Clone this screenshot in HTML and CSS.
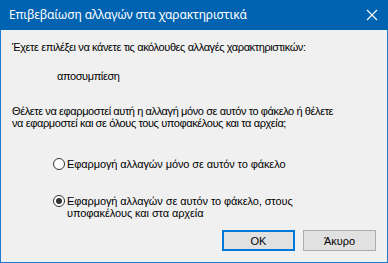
FILE: index.html
```html
<!DOCTYPE html>
<html lang="el">
<head>
    <meta charset="UTF-8">
    <title>Επιβεβαίωση αλλαγών στα χαρακτηριστικά</title>
    <link rel="stylesheet" href="styles.css">
</head>
<body>
    <div class="window">
        <div class="titlebar">
            <span class="title">Επιβεβαίωση αλλαγών στα χαρακτηριστικά</span>
            <svg class="close" width="12" height="12" viewBox="0 0 12 12">
                <path d="M1 1 L11 11 M11 1 L1 11" stroke="#fff" stroke-width="1.2" fill="none"/>
            </svg>
        </div>
        <div class="content">
            <p class="line">Έχετε επιλέξει να κάνετε τις ακόλουθες αλλαγές χαρακτηριστικών:</p>
            <p class="line attr">αποσυμπίεση</p>
            <p class="question">Θέλετε να εφαρμοστεί αυτή η αλλαγή μόνο σε αυτόν το φάκελο ή θέλετε<br>να εφαρμοστεί και σε όλους τους υποφακέλους και τα αρχεία;</p>
            <div class="options">
                <label class="option">
                    <span class="radio"></span>
                    <span class="label-text">Εφαρμογή αλλαγών μόνο σε αυτόν το φάκελο</span>
                </label>
                <label class="option second">
                    <span class="radio checked"></span>
                    <span class="label-text">Εφαρμογή αλλαγών σε αυτόν το φάκελο, στους<br>υποφακέλους και στα αρχεία</span>
                </label>
            </div>
            <div class="buttons">
                <button class="btn default">OK</button>
                <button class="btn">Άκυρο</button>
            </div>
        </div>
    </div>
</body>
</html>
```

FILE: styles.css
```css
body {
    margin: 0;
    background: #f0f0f0;
    font-family: 'Liberation Sans', Arial, sans-serif;
    -webkit-font-smoothing: antialiased;
}
.window {
    width: 388px;
    height: 263px;
    box-sizing: border-box;
    border: 1px solid #1a7bd0;
    border-top: none;
    background: #f0f0f0;
    display: flex;
    flex-direction: column;
}
.titlebar {
    height: 30px;
    margin: 0 -1px;
    background: #0063b1;
    color: #fff;
    display: flex;
    align-items: center;
    justify-content: space-between;
    padding: 0 10px 0 9px;
    flex-shrink: 0;
}
.title {
    font-family: 'Noto Sans', sans-serif;
    font-size: 12px;
    letter-spacing: -0.15px;
    position: relative;
    top: -1px;
}
.close {
    display: block;
}
.content {
    padding: 11px 11px 0 11px;
    font-size: 11px;
    letter-spacing: -0.4px;
    color: #000;
    flex: 1;
    display: flex;
    flex-direction: column;
}
.line {
    margin: 0;
    line-height: 13px;
}
.attr {
    margin-top: 16px;
    padding-left: 45px;
}
.question {
    margin: 22px 0 0 0;
    line-height: 12px;
    white-space: nowrap;
}
.options {
    margin-top: 29px;
    padding-left: 41px;
}
.option {
    display: flex;
    align-items: flex-start;
    line-height: 12px;
    letter-spacing: -0.1px;
}
.option.second {
    margin-top: 25px;
}
.radio {
    width: 12px;
    height: 12px;
    box-sizing: border-box;
    border: 1px solid #333;
    border-radius: 50%;
    background: #fff;
    margin-right: 2px;
    flex-shrink: 0;
    position: relative;
}
.radio.checked::after {
    content: '';
    position: absolute;
    left: 2px;
    top: 2px;
    width: 6px;
    height: 6px;
    border-radius: 50%;
    background: #333;
}
.buttons {
    margin-top: auto;
    margin-bottom: 11px;
    display: flex;
    justify-content: flex-end;
    gap: 8px;
}
.btn {
    width: 73px;
    height: 21px;
    box-sizing: border-box;
    border: 1px solid #adadad;
    background: #e1e1e1;
    font-family: 'Liberation Sans', Arial, sans-serif;
    font-size: 11px;
    color: #000;
    padding: 0;
}
.btn.default {
    border: 2px solid #0078d7;
}
```
